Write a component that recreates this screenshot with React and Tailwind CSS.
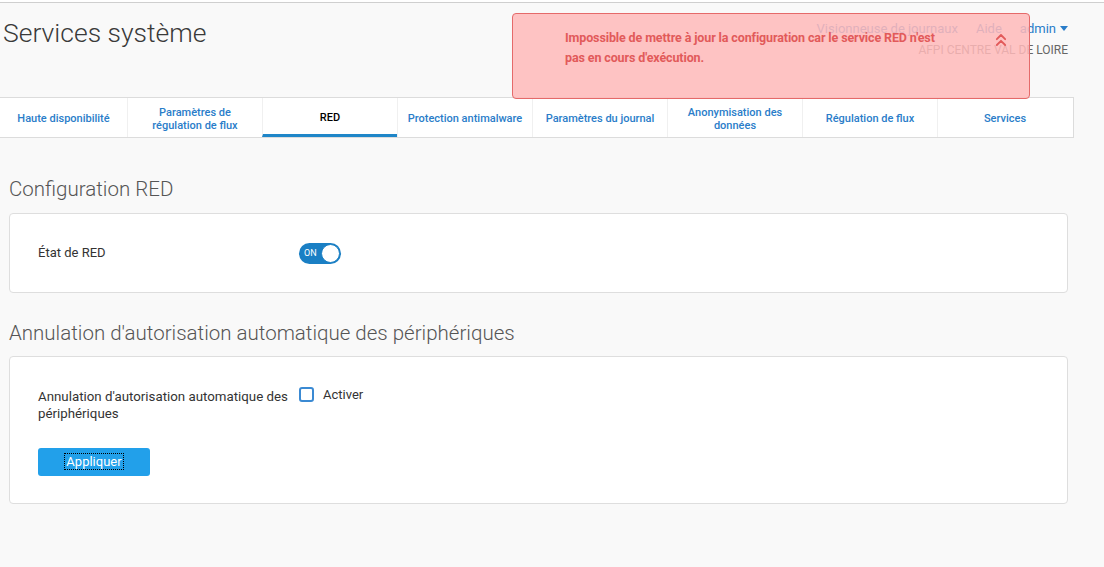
import { ChevronsUp } from "lucide-react";

const tabs = [
  "Paramètres de régulation de flux",
  "RED",
  "Protection antimalware",
  "Paramètres du journal",
  "Anonymisation des données",
  "Régulation de flux",
  "Services",
];

const App = () => {
  return (
    <div className="relative min-h-screen w-[1104px] bg-[#f9f9f9] border-t border-[#cfcfcf] mt-[2px] font-['Roboto',sans-serif] text-[#333]">
      {/* en-tête */}
      <div className="flex justify-between h-[94px] pr-[36px]">
        <h1 className="pl-[3px] pt-[14px] text-[26.5px] font-light text-[#3a3a3a] leading-[32px]">Services système</h1>
        <div className="pt-[16px] flex flex-col items-end">
          <div className="flex items-center gap-[18px] text-[13px] text-[#2a7dc9]">
            <span>Visionneuse de journaux</span>
            <span>Aide</span>
            <span className="flex items-center gap-1">
              admin
              <svg width="8" height="5" viewBox="0 0 8 5">
                <path d="M0 0h8L4 5z" fill="#2a7dc9" />
              </svg>
            </span>
          </div>
          <div className="text-[12px] text-[#666] mt-[2px]">AFPI CENTRE VAL DE LOIRE</div>
        </div>
      </div>

      {/* onglets */}
      <div className="flex w-[1074px] h-[41px] bg-white border-y border-r border-[#dcdcdc]">
        <div className="w-[127px] shrink-0 flex items-center justify-center text-center text-[11px] font-medium text-[#2a7dc9] leading-[13px] pt-[2px]">
          Haute disponibilité
        </div>
        {tabs.map((t) => (
          <div
            key={t}
            className={
              t === "RED"
                ? "w-[135px] shrink-0 flex items-center justify-center text-center text-[11px] font-medium text-black border-l border-[#f0f0f0] border-b-[3px] border-b-[#1f86c8] pt-[3px] leading-[13px]"
                : "w-[135px] shrink-0 flex items-center justify-center text-center text-[11px] font-medium text-[#2a7dc9] border-l border-[#f0f0f0] px-[5px] pt-[2px] leading-[13px]"
            }
          >
            {t === "Paramètres de régulation de flux" || t === "Anonymisation des données" ? (
              <span className="px-[12px]">{t}</span>
            ) : (
              t
            )}
          </div>
        ))}
      </div>

      <div className="pl-[9px] w-[1068px]">
        <h2 className="mt-[39px] text-[20.5px] font-light text-[#555] leading-[24px]">Configuration RED</h2>
        <div className="mt-[12px] h-[80px] bg-white border border-[#dedede] rounded-[4px] flex items-center pl-[28px]">
          <span className="w-[261px] text-[13px] text-[#333]">État de RED</span>
          <div className="flex items-center w-[42px] h-[21px] rounded-full bg-[#1a7fc4] pl-[5px] pr-[1px]">
            <span className="text-[9px] leading-none text-white flex-1">ON</span>
            <span className="w-[19px] h-[19px] rounded-full bg-white border border-[#1a7fc4]" />
          </div>
        </div>

        <h2 className="mt-[28px] text-[20.5px] font-light text-[#555] leading-[24px]">
          Annulation d'autorisation automatique des périphériques
        </h2>
        <div className="mt-[11px] h-[148px] bg-white border border-[#dedede] rounded-[4px] pl-[28px] pt-[30px]">
          <div className="flex">
            <div className="w-[261px] text-[13.3px] leading-[17px] text-[#333] pt-[1px]">
              Annulation d'autorisation automatique des périphériques
            </div>
            <div className="flex items-start gap-[9px]">
              <span className="w-[15px] h-[15px] border-2 border-solid border-[#3b8ad3] rounded-[3px] bg-white" />
              <span className="text-[13px] leading-[15px] text-[#333]">Activer</span>
            </div>
          </div>
          <button className="mt-[26px] w-[112px] h-[28px] bg-[#22a0ea] rounded-[3px] text-white text-[13px]">
            <span className="outline outline-1 outline-dotted outline-black px-[1px]">Appliquer</span>
          </button>
        </div>
      </div>

      {/* alerte */}
      <div className="absolute left-[512px] top-[10px] w-[518px] h-[86px] rounded-[4px] border border-[#e56a6a] bg-[#ffb9b9]/85 flex items-start pl-[52px] pr-[16px] pt-[14px]">
        <p className="w-[374px] text-[12.5px] font-bold tracking-[-0.12px] leading-[20px] text-[#e25a5a]">
          Impossible de mettre à jour la configuration car le service RED n'est pas en cours d'exécution.
        </p>
        <ChevronsUp className="ml-auto mt-[2px] mr-[2px] text-[#e25a5a]" size={20} strokeWidth={2.2} />
      </div>
    </div>
  );
};

export default App;
